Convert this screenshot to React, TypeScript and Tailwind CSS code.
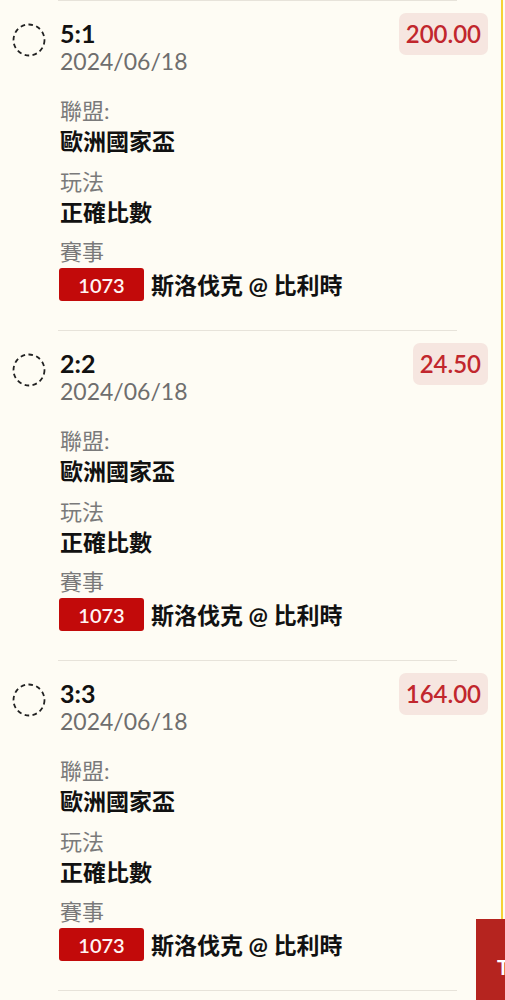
import React from "react";

type Item = { score: string; odds: string };

const items: Item[] = [
  { score: "5:1", odds: "200.00" },
  { score: "2:2", odds: "24.50" },
  { score: "3:3", odds: "164.00" },
];

const FONT = { fontFamily: "Lato, 'Noto Sans CJK TC', 'Noto Sans', sans-serif" };

function DashedCircle() {
  return (
    <svg width="34" height="34" viewBox="0 0 34 34" className="shrink-0">
      <circle
        cx="17"
        cy="17"
        r="15.5"
        fill="none"
        stroke="#222"
        strokeWidth="1.8"
        strokeDasharray="4.6 3.4"
      />
    </svg>
  );
}

function Separator() {
  return <div className="ml-[58px] h-px w-[399px] bg-[#e7e3da]" />;
}

function Row({ item }: { item: Item }) {
  return (
    <div className="h-[329px]">
      <div className="flex items-start">
        <div className="ml-[12px] mt-[22px]">
          <DashedCircle />
        </div>
        <div className="ml-[14px] flex-1 pt-[18px]">
          <div className="text-[25px] font-bold leading-[28px] text-[#111]">{item.score}</div>
          <div className="text-[23px] leading-[28px] text-[#6e6e6e]">2024/06/18</div>
        </div>
        <div className="mr-[17px] mt-[12px] flex h-[42px] items-center rounded-[7px] bg-[#f6e6e0] px-[7px] text-[24px] font-semibold text-[#c1272d]">
          {item.odds}
        </div>
      </div>
      <div className="mt-[22px] pl-[60px]">
        <div className="text-[22px] leading-[28px] text-[#7a7a7a]">聯盟:</div>
        <div className="text-[23px] font-bold leading-[32px] text-[#111]">歐洲國家盃</div>
        <div className="mt-[11px] text-[22px] leading-[28px] text-[#7a7a7a]">玩法</div>
        <div className="text-[23px] font-bold leading-[32px] text-[#111]">正確比數</div>
        <div className="mt-[10px] text-[22px] leading-[28px] text-[#7a7a7a]">賽事</div>
        <div className="mt-[2px] flex h-[33px] items-center">
          <div className="ml-[-1px] flex h-[33px] w-[85px] items-center justify-center rounded-[3px] bg-[#c20a0a] text-[20px] font-semibold leading-none text-[#fff4f4]">
            1073
          </div>
          <div className="ml-[7px] text-[23px] font-bold leading-[32px] text-[#111]">
            斯洛伐克 @ 比利時
          </div>
        </div>
      </div>
    </div>
  );
}

export default function App() {
  return (
    <div className="relative h-[1000px] w-[505px] overflow-hidden bg-[#fefcf4]" style={FONT}>
      {items.map((it, i) => (
        <div key={i}>
          <Separator />
          <Row item={it} />
        </div>
      ))}
      <Separator />
      <div className="absolute left-[501px] top-0 h-[919px] w-[2px] bg-[#f5d236]" />
      <div className="absolute left-[476px] top-[919px] h-[81px] w-[29px] overflow-hidden bg-[#b5241f]">
        <div className="absolute left-[21px] top-[36px] whitespace-nowrap text-[20px] font-bold leading-[24px] text-white">
          TOP
        </div>
      </div>
    </div>
  );
}
